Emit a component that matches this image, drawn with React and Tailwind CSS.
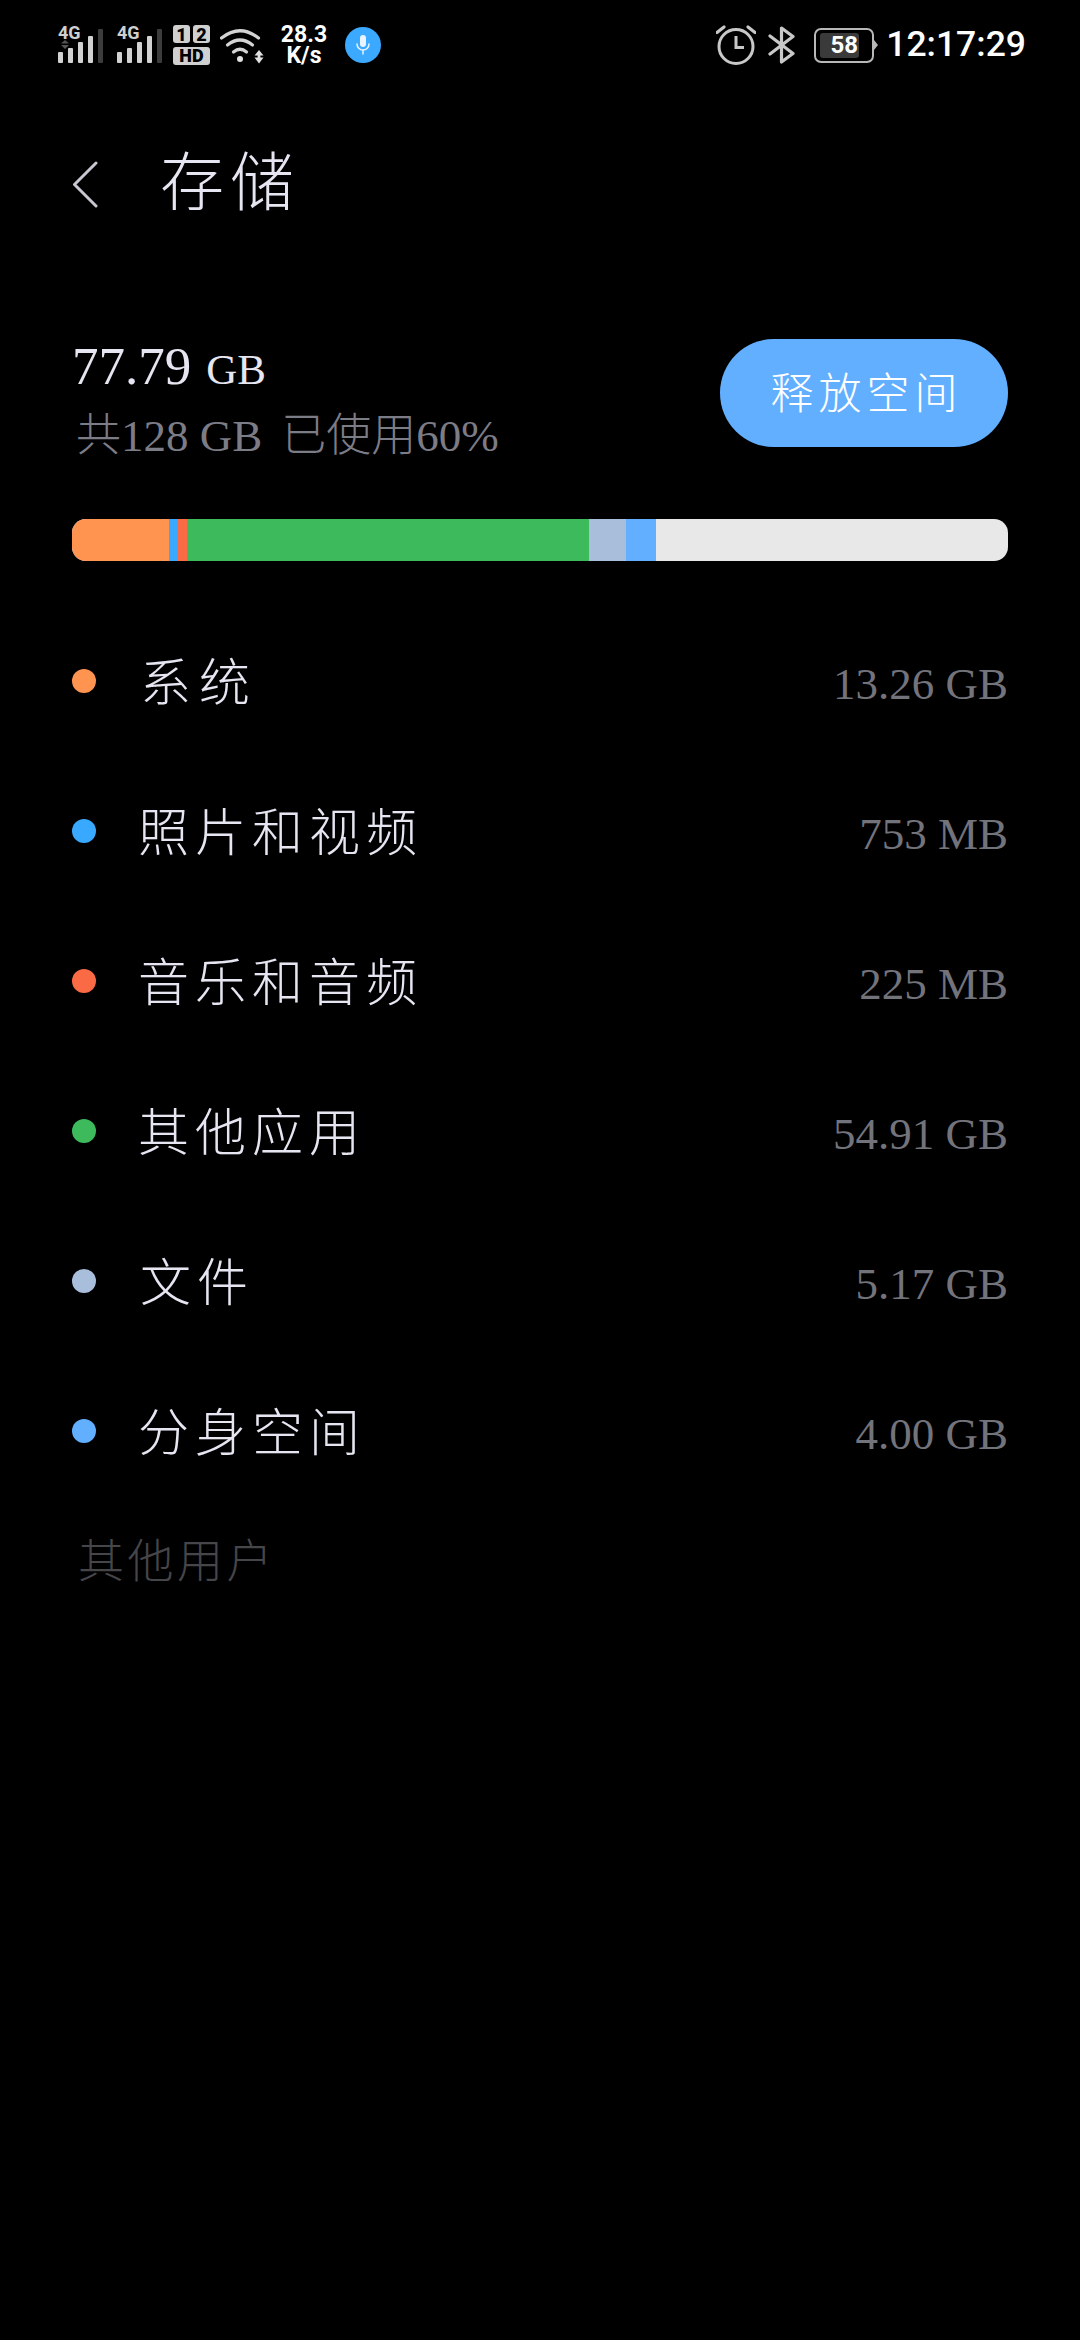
const SERIF = 'font-["Liberation_Serif","Noto_Sans_CJK_SC",serif]'

const ROWS = [
  { label: '系统', value: '13.26 GB', dot: 'bg-[#ff9350]', pad: 'pl-[2px]', track: 'tracking-[8px]' },
  { label: '照片和视频', value: '753 MB', dot: 'bg-[#39a9ff]', pad: 'pl-0', track: 'tracking-[6px]' },
  { label: '音乐和音频', value: '225 MB', dot: 'bg-[#f96a45]', pad: 'pl-0', track: 'tracking-[6px]' },
  { label: '其他应用', value: '54.91 GB', dot: 'bg-[#3dba5c]', pad: 'pl-0', track: 'tracking-[6px]' },
  { label: '文件', value: '5.17 GB', dot: 'bg-[#a8bedb]', pad: 'pl-[2px]', track: 'tracking-[6px]' },
  { label: '分身空间', value: '4.00 GB', dot: 'bg-[#62afff]', pad: 'pl-0', track: 'tracking-[6px]' },
]

function Signal({ dual }) {
  return (
    <div className="relative h-10 w-[46px]">
      <span className="absolute left-0 top-0 font-['Roboto',sans-serif] text-[18px] font-bold leading-[16px] text-[#cfcfcf]">4G</span>
      <svg width="46" height="40" viewBox="0 0 46 40" fill="none">
        {dual && <path d="M3 18.5 L7 15 L11 18.5 Z M3 20 L7 24 L11 20 Z" fill="#555" />}
        <rect x="0" y="27" width="5" height="11" rx="1" fill="#d2d2d2" />
        <rect x="10" y="23" width="5" height="15" rx="1" fill="#d2d2d2" />
        <rect x="20" y="17" width="5" height="21" rx="1" fill="#d2d2d2" />
        <rect x="30" y="11" width="5" height="27" rx="1" fill="#d2d2d2" />
        <rect x="40" y="4" width="5" height="34" rx="1" fill="#3c3c3c" />
      </svg>
    </div>
  )
}

function SimHd() {
  return (
    <svg width="38" height="40" viewBox="0 0 38 40">
      <rect x="0" y="0" width="17" height="18" rx="3" fill="#d0d0d0" />
      <rect x="20" y="0" width="17" height="18" rx="3" fill="#d0d0d0" />
      <rect x="0" y="22" width="37" height="18" rx="3" fill="#d0d0d0" />
      <text x="8.5" y="15.5" textAnchor="middle" fontFamily="Roboto, sans-serif" fontWeight="900" fontSize="18" fill="#000">1</text>
      <text x="28.5" y="15.5" textAnchor="middle" fontFamily="Roboto, sans-serif" fontWeight="900" fontSize="18" fill="#000">2</text>
      <text x="18.5" y="37" textAnchor="middle" fontFamily="Roboto, sans-serif" fontWeight="900" fontSize="18" fill="#000">HD</text>
    </svg>
  )
}

function Wifi() {
  return (
    <svg width="44" height="36" viewBox="0 0 44 36" fill="none">
      <path d="M1.5 10 Q20 -4.5 38.5 10" stroke="#d4d4d4" strokeWidth="3.2" strokeLinecap="round" />
      <path d="M7.5 17 Q20 7 32.5 17" stroke="#d4d4d4" strokeWidth="3.2" strokeLinecap="round" />
      <path d="M13.5 24 Q20 18.5 26.5 24" stroke="#d4d4d4" strokeWidth="3.2" strokeLinecap="round" />
      <circle cx="20" cy="31" r="3" fill="#e2e2e2" />
      <path d="M34.5 27.5 L39 22 L43.5 27.5 Z M34.5 29.5 L39 35.5 L43.5 29.5 Z" fill="#e0e0e0" />
      <rect x="37.6" y="26" width="2.8" height="5" fill="#e0e0e0" />
    </svg>
  )
}

function MicBadge() {
  return (
    <div className="flex h-9 w-9 items-center justify-center rounded-full bg-[#3ba9ff]">
      <svg width="18" height="22" viewBox="0 0 18 22" fill="none">
        <rect x="6" y="1" width="6" height="12" rx="3" fill="#e8f4ff" />
        <path d="M3 10 a6 6 0 0 0 12 0 M9 16 V20" stroke="#e8f4ff" strokeWidth="1.5" strokeLinecap="round" />
      </svg>
    </div>
  )
}

function Alarm() {
  return (
    <svg width="40" height="40" viewBox="0 0 40 40" fill="none">
      <circle cx="20" cy="21.5" r="17" stroke="#c8c8c8" strokeWidth="3" />
      <path d="M20 11 V22.5 H28" stroke="#c8c8c8" strokeWidth="3" />
      <path d="M1 7.5 L8 2 M39 7.5 L32 2" stroke="#c8c8c8" strokeWidth="3.2" strokeLinecap="round" />
    </svg>
  )
}

function Bluetooth() {
  return (
    <svg width="28" height="38" viewBox="0 0 28 38" fill="none">
      <path d="M2 10 L25 27.5 L13.5 36 V2 L25 10.5 L2 28" stroke="#c8c8c8" strokeWidth="3.2" strokeLinecap="round" strokeLinejoin="round" />
    </svg>
  )
}

function Battery() {
  return (
    <div className="flex items-center">
      <div className="flex h-[35px] w-[60px] items-center rounded-[7px] border-2 border-[#b8b8b8] pl-[4px]">
        <div className="flex h-[25px] w-[39px] items-center justify-center rounded-[3px] bg-[#3a3a3a] pl-[9px] font-['Roboto',sans-serif] text-[24px] font-bold text-white">
          58
        </div>
      </div>
      <div className="h-0 w-0 border-y-[5px] border-l-[4px] border-y-transparent border-l-[#b8b8b8]" />
    </div>
  )
}

function StatusBar() {
  return (
    <div className="flex h-[90px] items-center justify-between pl-[58px] pr-[54px]">
      <div className="flex items-center">
        <Signal dual />
        <div className="ml-[13px]"><Signal /></div>
        <div className="ml-[10px]"><SimHd /></div>
        <div className="ml-[9px] mt-[2px]"><Wifi /></div>
        <div className="ml-[15px] flex w-[50px] flex-col items-center font-['Roboto',sans-serif] text-[23px] font-bold leading-[21px] text-white">
          <span>28.3</span>
          <span>K/s</span>
        </div>
        <div className="ml-[16px]"><MicBadge /></div>
      </div>
      <div className="flex items-center">
        <Alarm />
        <div className="ml-[12px]"><Bluetooth /></div>
        <div className="ml-[18px]"><Battery /></div>
        <span className="ml-[8px] font-['Roboto',sans-serif] text-[35.5px] font-medium leading-none text-white">12:17:29</span>
      </div>
    </div>
  )
}

export default function App() {
  return (
    <div className={`min-h-[2340px] bg-black ${SERIF}`}>
      <StatusBar />

      <div className="mt-[49px] flex h-[90px] items-center pl-[73px]">
        <svg width="27" height="47" viewBox="0 0 27 47" fill="none">
          <path d="M23 2 L1.5 23.5 L23 45" stroke="#c8c8d2" strokeWidth="3" strokeLinecap="round" strokeLinejoin="round" />
        </svg>
        <h1 className="ml-[60px] text-[64px] font-light leading-none tracking-[6px] text-[#e6e6f2]">存储</h1>
      </div>

      <div className="mt-[107px] flex h-[111px] items-start justify-between px-[72px]">
        <div>
          <div className="leading-[60px] text-[#e6e6f2]">
            <span className="text-[53px]">77.79</span>
            <span className="ml-[15px] text-[43px]">GB</span>
          </div>
          <div className="mt-[1px] pl-[4px] text-[45px] font-light leading-[52px] text-[#7c7c86]">
            共128 GB<span className="ml-[19px]">已使用</span>60%
          </div>
        </div>
        <button className="mt-[3px] flex h-[108px] w-[288px] items-center justify-center rounded-[54px] bg-[#62afff] pl-[5px] pt-[5px] text-[43px] font-light tracking-[5px] text-white">
          释放空间
        </button>
      </div>

      <div className="mx-[72px] mt-[72px] flex h-[42px] overflow-hidden rounded-[14px] bg-[#e8e8e8]">
        <div className="w-[97px] bg-[#ff9350]" />
        <div className="w-[9px] bg-[#39a9ff]" />
        <div className="w-[9px] bg-[#f96a45]" />
        <div className="w-[402px] bg-[#3dba5c]" />
        <div className="w-[37px] bg-[#a8bedb]" />
        <div className="w-[30px] bg-[#62afff]" />
      </div>

      <div className="mt-[45px] px-[72px]">
        {ROWS.map((row) => (
          <div key={row.label} className="flex h-[150px] items-center justify-between">
            <div className="flex items-center">
              <div className={`h-6 w-6 rounded-full ${row.dot}`} />
              <span className={`ml-[42px] pt-[6px] text-[51px] font-light leading-none text-[#e6e6f2] ${row.pad} ${row.track}`}>
                {row.label}
              </span>
            </div>
            <span className="pt-[6px] text-[45px] leading-none text-[#73737c]">{row.value}</span>
          </div>
        ))}
      </div>

      <div className="mt-[26px] pl-[78px] text-[46px] font-light leading-[60px] tracking-[3.5px] text-[#45454a]">其他用户</div>
    </div>
  )
}
